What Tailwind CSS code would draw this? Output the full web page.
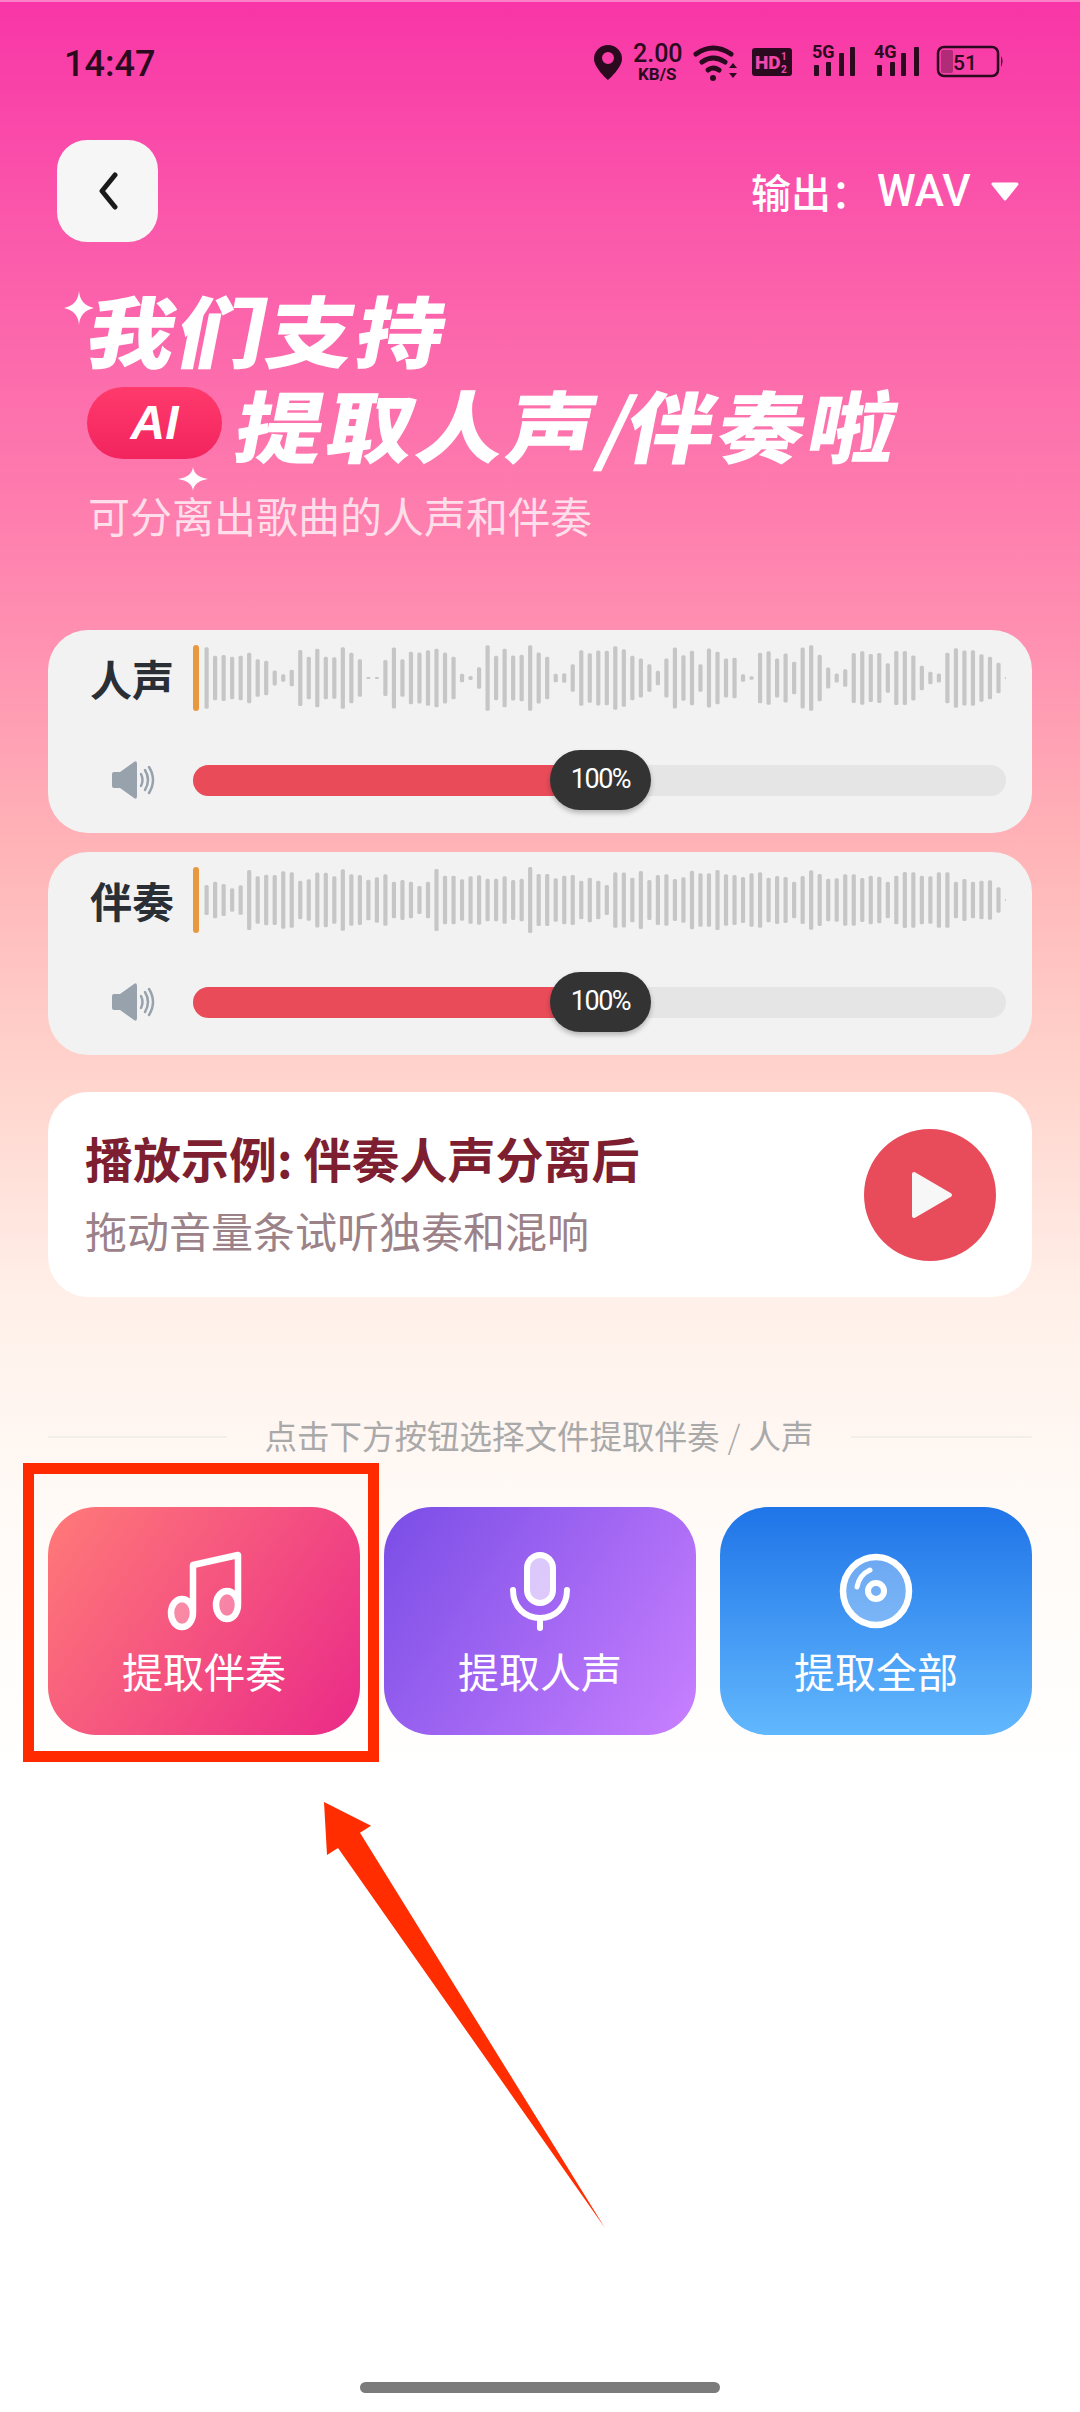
<!DOCTYPE html>
<html lang="zh-CN">
<head>
  <meta charset="UTF-8">
  <meta name="viewport" content="width=device-width, initial-scale=1.0">
  <title>提取人声/伴奏</title>
  <script src="https://cdn.jsdelivr.net/npm/@tailwindcss/browser@4"></script>
</head>
<body class="bg-white">
  <div class="relative w-[1080px] h-[2412px] overflow-hidden flex flex-col font-['Noto_Sans_CJK_SC','Noto_Sans',sans-serif] bg-[linear-gradient(180deg,#f835a7_0px,#fb5dab_260px,#fe80ae_530px,#ff8fb1_630px,#ffb4b7_850px,#ffd3cb_1070px,#fff0e9_1300px,#fffaf6_1500px,#ffffff_1780px)]">

    <!-- Status bar -->
    <div class="h-[126px] shrink-0 flex items-center justify-between pl-[64px] pr-[76px] border-t-[2px] border-[#fb82c8]">
      <span class="font-['Roboto',sans-serif] font-medium text-[36px] text-[#2b0a20]">14:47</span>
      <svg width="411" height="60" viewBox="0 -10 411 60" fill="#2b0a20" class="mt-[-2px]">
        <path d="M15 2a14 14 0 0 0-14 14c0 9 14 21 14 21s14-12 14-21A14 14 0 0 0 15 2zm0 19a6 6 0 1 1 0-12 6 6 0 0 1 0 12z"/>
        <text x="40" y="19" font-family="Roboto" font-size="25" font-weight="500">2.00</text>
        <text x="45" y="37" font-family="Roboto" font-size="17" font-weight="700">KB/S</text>
        <g fill="none" stroke="#2b0a20" stroke-width="5" stroke-linecap="round">
          <path d="M103 11q17-12 35 0"/><path d="M109 19q11-8 23 0"/><path d="M115 27q5-4 11 0"/>
        </g>
        <circle cx="120" cy="35" r="3"/>
        <path d="M136 25l4-5 4 5zM136 30l4 5 4-5z"/>
        <rect x="159" y="5" width="40" height="28" rx="3"/>
        <text x="162" y="26" font-family="Roboto" font-size="19" font-weight="900" fill="#f048ac">HD</text>
        <text x="188" y="17" font-family="Roboto" font-size="10" font-weight="700" fill="#f048ac">1</text>
        <text x="188" y="30" font-family="Roboto" font-size="10" font-weight="700" fill="#f048ac">2</text>
        <text x="219" y="15" font-family="Roboto" font-size="18" font-weight="700">5G</text>
        <rect x="221" y="22" width="5" height="11" rx="1"/><rect x="233" y="19" width="5" height="14" rx="1"/><rect x="246" y="10" width="5" height="23" rx="1"/><rect x="257" y="4" width="5" height="29" rx="1"/>
        <text x="281" y="15" font-family="Roboto" font-size="18" font-weight="700">4G</text>
        <rect x="284" y="22" width="5" height="11" rx="1"/><rect x="297" y="19" width="5" height="14" rx="1"/><rect x="308" y="10" width="5" height="23" rx="1"/><rect x="321" y="4" width="5" height="29" rx="1"/>
        <rect x="345" y="4" width="60" height="29" rx="6" fill="none" stroke="#2b0a20" stroke-width="2.5"/>
        <rect x="348" y="7" width="12" height="23" rx="2" fill="#2b0a20" fill-opacity="0.35"/>
        <text x="360" y="27" font-family="Roboto" font-size="21" font-weight="500">51</text>
        <path d="M408 13q3 5 0 11z"/>
      </svg>
    </div>

    <!-- Header -->
    <div class="mt-[14px] shrink-0 flex items-center justify-between pl-[57px] pr-[60px]">
      <button class="w-[101px] h-[102px] rounded-[30px] bg-[#f6f6f6] flex items-center justify-center">
        <svg width="20" height="38" viewBox="0 0 20 38" fill="none" stroke="#1a1a1a" stroke-width="5" stroke-linecap="round" stroke-linejoin="round"><path d="M17 3 L4 19 L17 35"/></svg>
      </button>
      <div class="flex items-center text-white text-[40px] font-medium">
        <span class="w-[126px]">输出：</span>
        <span class="w-[113px] text-[44px] font-['Roboto',sans-serif]">WAV</span>
        <svg width="30" height="20" viewBox="0 0 30 20" fill="#ffffff" stroke="#ffffff" stroke-width="3" stroke-linejoin="round"><path d="M3 3h24L15 18z"/></svg>
      </div>
    </div>

    <!-- Title -->
    <div class="relative mt-[41px] shrink-0 pl-[87px] text-white">
      <svg class="absolute left-[64px] top-[8px]" width="30" height="34" viewBox="0 0 30 34" fill="#ffffff"><path d="M15 0q1 14 15 17q-14 3-15 17q-1-14-15-17q14-3 15-17z"/></svg>
      <div class="h-[96px] mt-[-3px] flex items-center pl-[3px]">
        <span class="text-[78px] leading-none font-black tracking-[2px] whitespace-nowrap origin-left scale-x-[1.12] skew-x-[-10deg]">我们支持</span>
      </div>
      <div class="h-[96px] mt-[-1px] flex items-center">
        <span class="w-[135px] h-[72px] rounded-[36px] bg-[linear-gradient(180deg,#ff3a6c,#f2245e)] flex items-center justify-center mr-[16px] font-['Liberation_Sans',sans-serif] font-bold italic text-[48px]">AI</span>
        <span class="text-[78px] leading-none font-black tracking-[3px] whitespace-nowrap origin-left scale-x-[1.12] skew-x-[-10deg]">提取人声<span class="tracking-[-5px] font-bold">/</span>伴奏啦</span>
      </div>
      <svg class="absolute left-[178px] top-[184px]" width="30" height="24" viewBox="0 0 30 34" preserveAspectRatio="none" fill="#ffffff"><path d="M15 0q1 14 15 17q-14 3-15 17q-1-14-15-17q14-3 15-17z"/></svg>
      <div class="mt-[18px] pl-[1px] h-[50px] flex items-center text-[42px] text-white/75 whitespace-nowrap">可分离出歌曲的人声和伴奏</div>
    </div>

    <!-- Vocal card -->
    <div class="mt-[91px] mx-[48px] h-[203px] shrink-0 rounded-[40px] bg-[#f2f2f2] pt-[15px] pl-[44px]">
      <div class="flex items-center h-[66px]">
        <span class="w-[101px] ml-[-2px] mr-[2px] text-[42px] font-semibold text-[#2a2f36] leading-none">人声</span>
        <div class="relative w-[813px] h-[66px]">
          <svg data-wave="vocal" class="absolute left-0 top-0" width="813" height="66" viewBox="0 0 813 66"></svg>
          <div class="absolute left-0 top-0 w-[6px] h-[66px] rounded-full bg-[#e8993f]"></div>
        </div>
      </div>
      <div class="mt-[38px] flex items-center h-[62px]">
        <span class="w-[101px] pl-[19px]">
          <svg width="44" height="38" viewBox="0 0 44 38" fill="#98a2ad"><path d="M1 13q0-2 2-2h6L23 1q3-2 3 2v32q0 4-3 2L9 27H3q-2 0-2-2z"/><g fill="none" stroke="#98a2ad" stroke-width="2.5" stroke-linecap="round"><path d="M30 13q3 6 0 12"/><path d="M34 9q6 10 0 20"/><path d="M38 6q8 13 0 26"/></g></svg>
        </span>
        <div class="relative w-[813px] h-[31px] rounded-full bg-[#e5e5e5]">
          <div class="absolute left-0 top-0 h-[31px] w-[400px] rounded-l-full bg-[#e94b59]"></div>
          <div class="absolute left-[357px] top-[-15px] w-[101px] h-[60px] rounded-[30px] bg-[#333333] shadow-[0_3px_5px_rgba(0,0,0,0.25)] flex items-center justify-center font-['Roboto',sans-serif] text-[27px] tracking-[-1.5px] text-white">100%</div>
        </div>
      </div>
    </div>

    <!-- Accompaniment card -->
    <div class="mt-[19px] mx-[48px] h-[203px] shrink-0 rounded-[40px] bg-[#f2f2f2] pt-[15px] pl-[44px]">
      <div class="flex items-center h-[66px]">
        <span class="w-[101px] ml-[-2px] mr-[2px] text-[42px] font-semibold text-[#2a2f36] leading-none">伴奏</span>
        <div class="relative w-[813px] h-[66px]">
          <svg data-wave="accomp" class="absolute left-0 top-0" width="813" height="66" viewBox="0 0 813 66"></svg>
          <div class="absolute left-0 top-0 w-[6px] h-[66px] rounded-full bg-[#e8993f]"></div>
        </div>
      </div>
      <div class="mt-[38px] flex items-center h-[62px]">
        <span class="w-[101px] pl-[19px]">
          <svg width="44" height="38" viewBox="0 0 44 38" fill="#98a2ad"><path d="M1 13q0-2 2-2h6L23 1q3-2 3 2v32q0 4-3 2L9 27H3q-2 0-2-2z"/><g fill="none" stroke="#98a2ad" stroke-width="2.5" stroke-linecap="round"><path d="M30 13q3 6 0 12"/><path d="M34 9q6 10 0 20"/><path d="M38 6q8 13 0 26"/></g></svg>
        </span>
        <div class="relative w-[813px] h-[31px] rounded-full bg-[#e5e5e5]">
          <div class="absolute left-0 top-0 h-[31px] w-[400px] rounded-l-full bg-[#e94b59]"></div>
          <div class="absolute left-[357px] top-[-15px] w-[101px] h-[60px] rounded-[30px] bg-[#333333] shadow-[0_3px_5px_rgba(0,0,0,0.25)] flex items-center justify-center font-['Roboto',sans-serif] text-[27px] tracking-[-1.5px] text-white">100%</div>
        </div>
      </div>
    </div>

    <!-- Example player -->
    <div class="mt-[37px] mx-[48px] h-[205px] shrink-0 rounded-[40px] bg-white flex items-center justify-between pl-[37px] pr-[36px]">
      <div class="flex flex-col gap-[16px] mt-[-3px]">
        <div class="h-[56px] flex items-center text-[48px] font-bold text-[#7d1f30] whitespace-nowrap">播放示例: 伴奏人声分离后</div>
        <div class="h-[56px] flex items-center text-[42px] text-[#9b8288] whitespace-nowrap">拖动音量条试听独奏和混响</div>
      </div>
      <div class="w-[132px] h-[132px] rounded-full bg-[#e84b5a] flex items-center justify-center pl-[4px]">
        <svg width="42" height="48" viewBox="0 0 42 48" fill="#f7f7f7" stroke="#f7f7f7" stroke-width="4" stroke-linejoin="round"><path d="M3 3 L39 24 L3 45z"/></svg>
      </div>
    </div>

    <!-- Hint -->
    <div class="mt-[120px] mx-[48px] h-[40px] shrink-0 flex items-center justify-between">
      <div class="w-[179px] h-[2px] bg-[#f1eeeb]"></div>
      <span class="mt-[-4px] text-[32.500px] text-[#a9a9a9] whitespace-nowrap">点击下方按钮选择文件提取伴奏<span class="px-[8px] font-light">/</span>人声</span>
      <div class="w-[181px] h-[2px] bg-[#f1eeeb]"></div>
    </div>

    <!-- Extract buttons -->
    <div class="mt-[50px] mx-[48px] h-[228px] shrink-0 grid grid-cols-3 gap-[24px] text-white text-[41px]">
      <div class="rounded-[48px] bg-[linear-gradient(125deg,#ff7a78,#ea2a88)] flex flex-col items-center pt-[43px]">
        <svg width="86" height="82" viewBox="0 0 86 82" fill="#ffffff" fill-opacity="0.3" stroke="#ffffff" stroke-width="6.500" stroke-linecap="round" stroke-linejoin="round">
          <ellipse cx="21" cy="63" rx="11" ry="14"/><ellipse cx="66" cy="55" rx="11" ry="14"/>
          <path fill="none" d="M32 60V15L77 5v47"/>
        </svg>
        <span class="mt-[10px] leading-[56px]">提取伴奏</span>
      </div>
      <div class="rounded-[48px] bg-[linear-gradient(125deg,#7a4de6,#c880ff)] flex flex-col items-center pt-[43px]">
        <svg width="86" height="82" viewBox="0 0 86 82" fill="none" stroke="#ffffff" stroke-width="6" stroke-linecap="round">
          <rect x="30" y="5" width="26" height="48" rx="13" fill="#ffffff" fill-opacity="0.65"/>
          <path d="M16 40c0 17 12 28 27 28s27-11 27-28"/>
          <path d="M43 68v10"/>
        </svg>
        <span class="mt-[10px] leading-[56px]">提取人声</span>
      </div>
      <div class="rounded-[48px] bg-[linear-gradient(180deg,#1f74e8,#62b8fd)] flex flex-col items-center pt-[43px]">
        <svg width="86" height="82" viewBox="0 0 86 82" fill="none" stroke="#ffffff" stroke-linecap="round">
          <ellipse cx="43" cy="41" rx="33" ry="34" stroke-width="6.500" fill="#ffffff" fill-opacity="0.3"/>
          <circle cx="43" cy="41" r="8" stroke-width="6"/>
          <path d="M24 37q2-12 13-17" stroke-width="5"/>
        </svg>
        <span class="mt-[10px] leading-[56px]">提取全部</span>
      </div>
    </div>

    <!-- Home indicator -->
    <div class="mt-auto mb-[19px] mx-auto w-[360px] h-[11px] rounded-full bg-[#7b7b7b] shrink-0"></div>

    <!-- Annotation: red box and arrow drawn over the page -->
    <div class="absolute left-[23px] top-[1463px] w-[356px] h-[299px] border-[11px] border-[#ff2a00]"></div>
    <svg class="absolute left-[300px] top-[1780px]" width="330" height="470" viewBox="0 0 330 470" fill="#ff2d00">
      <path d="M24 22 L71 45.700 L60 52.700 L305 448 L38 68 L27 75z"/>
    </svg>
  </div>

  <script>
    // heights read off the reference, in px * 3
    var waves = {
      vocal: [185,133,138,128,133,152,113,103,45,22,50,168,127,175,127,125,185,152,113,6,6,108,183,112,157,153,167,175,153,128,25,12,65,197,133,175,135,140,197,153,127,25,28,82,167,148,165,163,190,173,133,117,83,43,117,183,137,163,83,177,157,117,122,23,10,152,161,117,147,97,183,196,140,63,27,52,150,160,144,150,88,162,162,135,73,37,27,152,178,165,167,142,128,92,8],
      accomp: [90,110,96,70,88,180,142,152,150,173,166,116,125,165,164,142,184,155,150,122,136,155,110,120,110,84,110,186,145,145,125,142,148,128,128,142,120,128,198,156,156,130,145,150,116,134,116,90,166,165,134,174,120,150,154,126,136,176,160,160,180,155,150,138,160,166,134,144,138,110,144,178,156,128,130,154,154,132,145,140,110,145,168,166,145,143,166,166,110,126,110,116,118,76,8]
    };
    document.querySelectorAll('[data-wave]').forEach(function (svg) {
      waves[svg.dataset.wave].forEach(function (h, i) {
        var bar = document.createElementNS('http://www.w3.org/2000/svg', 'rect');
        var real = Math.max(h / 3, 2);
        bar.setAttribute('x', 11.5 + i * 8.515);
        bar.setAttribute('y', 33 - real / 2);
        bar.setAttribute('width', 4.2);
        bar.setAttribute('height', real);
        bar.setAttribute('rx', 1.5);
        bar.setAttribute('fill', '#c6c6c6');
        svg.appendChild(bar);
      });
    });
  </script>
</body>
</html>
